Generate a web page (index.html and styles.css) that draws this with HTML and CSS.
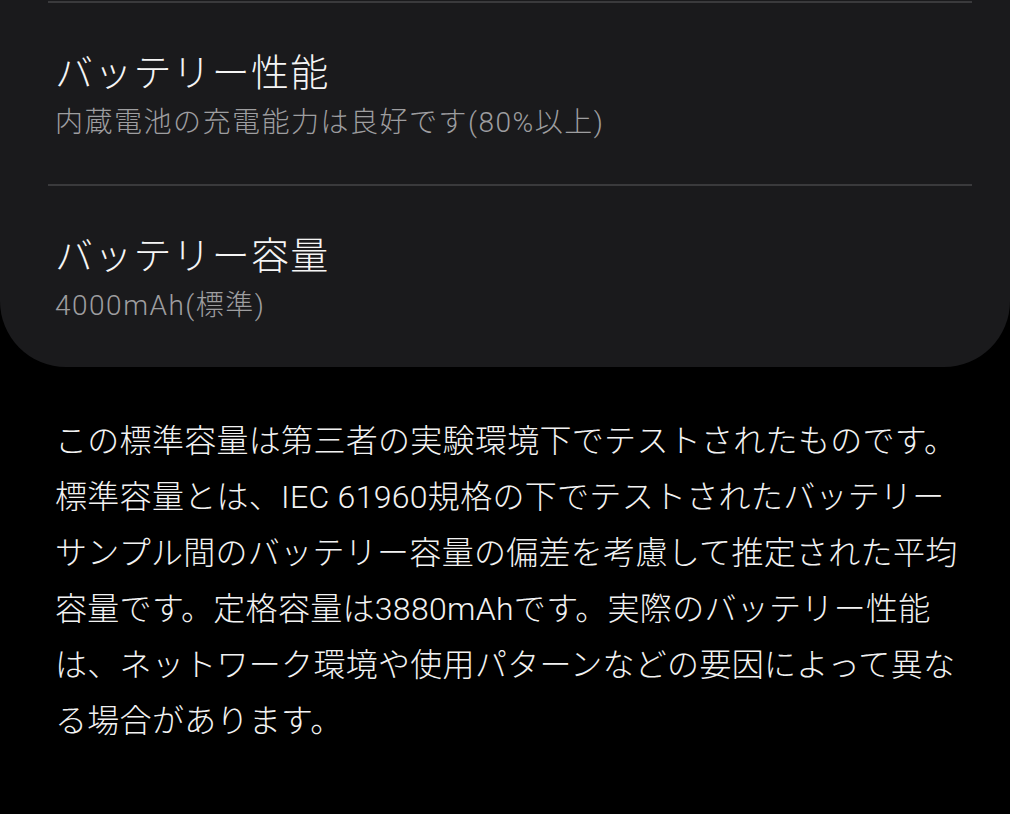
FILE: index.html
```html
<!DOCTYPE html>
<html lang="ja">
<head>
    <meta charset="UTF-8">
    <meta name="viewport" content="width=device-width, initial-scale=1.0">
    <title>バッテリー</title>
    <link rel="stylesheet" href="styles.css">
</head>
<body>
<div class="card">
    <div class="item">
        <div class="item-title">バッテリー性能</div>
        <div class="item-sub">内蔵電池の充電能力は良好です(80%以上)</div>
    </div>
    <div class="item">
        <div class="item-title">バッテリー容量</div>
        <div class="item-sub">4000mAh(標準)</div>
    </div>
</div>

<p class="note">この標準容量は第三者の実験環境下でテストされたものです。<br>標準容量とは、IEC 61960規格の下でテストされたバッテリー<br>サンプル間のバッテリー容量の偏差を考慮して推定された平均<br>容量です。定格容量は3880mAhです。実際のバッテリー性能<br>は、ネットワーク環境や使用パターンなどの要因によって異な<br>る場合があります。</p>
</body>
</html>
```

FILE: styles.css
```css
body { margin: 0; background: #000; font-family: Roboto, "Noto Sans CJK JP", sans-serif; font-weight: 300; color: #f4f4f4; }
.card { background: #1a1a1c; border-radius: 0 0 66px 66px; padding: 1px 38px 0 48px; }
.item { border-top: 2px solid #3a3a3c; padding: 45px 0 36px 7px; }
.item-title { font-size: 38px; line-height: 50px; letter-spacing: 1.2px; color: #f5f5f5; }
.item-sub { font-size: 28px; line-height: 50px; letter-spacing: 1.5px; color: #9e9ea0; }
.note { margin: 46px 0 0 55px; font-size: 32px; line-height: 56px; letter-spacing: 0.3px; color: #f2f2f2; white-space: nowrap; }
```
